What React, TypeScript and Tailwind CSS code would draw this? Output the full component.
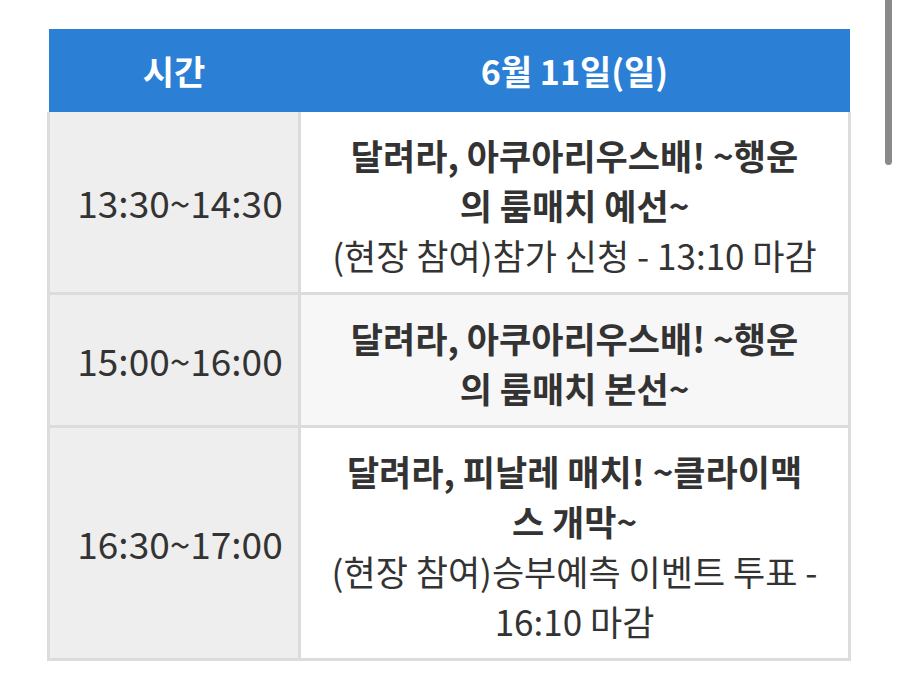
const rows = [
  {
    time: "13:30~14:30",
    title: "달려라, 아쿠아리우스배! ~행운의 룸매치 예선~",
    note: "(현장 참여)참가 신청 - 13:10 마감",
    shade: false,
  },
  {
    time: "15:00~16:00",
    title: "달려라, 아쿠아리우스배! ~행운의 룸매치 본선~",
    note: "",
    shade: true,
  },
  {
    time: "16:30~17:00",
    title: "달려라, 피날레 매치! ~클라이맥스 개막~",
    note: "(현장 참여)승부예측 이벤트 투표 - 16:10 마감",
    shade: false,
  },
];

export default function App() {
  return (
    <div
      className="relative w-[900px] h-[693px] bg-white overflow-hidden text-[#333]"
      style={{ fontFamily: '"Noto Sans CJK KR", "Noto Sans", sans-serif' }}
    >
      <div className="pt-[29px] pl-[47px]">
        <table className="w-[804px] border-collapse">
          <thead>
            <tr className="bg-[#2b80d6] text-white">
              <th className="w-[251px] h-[83px] text-[34px] font-semibold">시간</th>
              <th className="h-[83px] text-[34px] font-semibold">6월 11일(일)</th>
            </tr>
          </thead>
          <tbody>
            {rows.map((r) => (
              <tr key={r.time}>
                <td className="border-[3px] border-[#dcdcdc] border-t-0 bg-[#eeeeee] pl-3 text-center text-[37px] leading-[50px]">
                  {r.time}
                </td>
                <td
                  className={`border-[3px] border-[#dcdcdc] border-t-0 px-5 pt-[18px] pb-[12px] text-center text-[35px] leading-[50px] ${
                    r.shade ? "bg-[#f7f7f7]" : "bg-white"
                  }`}
                >
                  <div className="mx-auto max-w-[465px] font-bold">{r.title}</div>
                  {r.note && <div>{r.note}</div>}
                </td>
              </tr>
            ))}
          </tbody>
        </table>
      </div>
      <div className="absolute right-[8px] top-0 w-[7px] h-[165px] rounded-b-full bg-[#8a8a8a]" />
    </div>
  );
}
